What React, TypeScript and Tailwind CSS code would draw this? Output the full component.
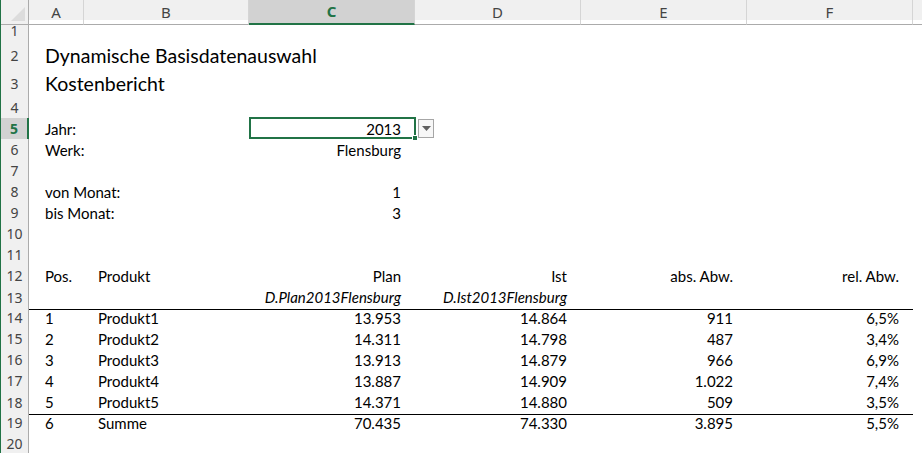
import React from 'react';

const cols = ['A', 'B', 'C', 'D', 'E', 'F'];

type Cell = { t?: string; r?: boolean; i?: boolean };

interface RowDef {
  n: number;
  h: string;
  big?: boolean;
  line?: boolean;
  cells?: Cell[];
}

const rows: RowDef[] = [
  { n: 1, h: 'h-[21px]' },
  { n: 2, h: 'h-[28px]', big: true, cells: [{ t: 'Dynamische Basisdatenauswahl' }] },
  { n: 3, h: 'h-[28px]', big: true, cells: [{ t: 'Kostenbericht' }] },
  { n: 4, h: 'h-[21px]' },
  { n: 5, h: 'h-[21px]', cells: [{ t: 'Jahr:' }, {}, { t: '2013', r: true }] },
  { n: 6, h: 'h-[21px]', cells: [{ t: 'Werk:' }, {}, { t: 'Flensburg', r: true }] },
  { n: 7, h: 'h-[21px]' },
  { n: 8, h: 'h-[21px]', cells: [{ t: 'von Monat:' }, {}, { t: '1', r: true }] },
  { n: 9, h: 'h-[21px]', cells: [{ t: 'bis Monat:' }, {}, { t: '3', r: true }] },
  { n: 10, h: 'h-[21px]' },
  { n: 11, h: 'h-[21px]' },
  {
    n: 12,
    h: 'h-[21px]',
    cells: [
      { t: 'Pos.' },
      { t: 'Produkt' },
      { t: 'Plan', r: true },
      { t: 'Ist', r: true },
      { t: 'abs. Abw.', r: true },
      { t: 'rel. Abw.', r: true },
    ],
  },
  {
    n: 13,
    h: 'h-[21px]',
    line: true,
    cells: [{}, {}, { t: 'D.Plan2013Flensburg', r: true, i: true }, { t: 'D.Ist2013Flensburg', r: true, i: true }],
  },
];

const products = [
  ['1', 'Produkt1', '13.953', '14.864', '911', '6,5%'],
  ['2', 'Produkt2', '14.311', '14.798', '487', '3,4%'],
  ['3', 'Produkt3', '13.913', '14.879', '966', '6,9%'],
  ['4', 'Produkt4', '13.887', '14.909', '1.022', '7,4%'],
  ['5', 'Produkt5', '14.371', '14.880', '509', '3,5%'],
  ['6', 'Summe', '70.435', '74.330', '3.895', '5,5%'],
];

products.forEach((p, idx) => {
  rows.push({
    n: 14 + idx,
    h: 'h-[21px]',
    line: idx === 4,
    cells: p.map((t, c) => ({ t, r: c > 1 })),
  });
});
rows.push({ n: 20, h: 'h-[21px]' });

const grid = 'grid grid-cols-[28px_55px_165px_166px_166px_166px_166px_1fr]';

// selection frame + fill handle + list dropdown of cell C5
function Selection() {
  return (
    <div className="pointer-events-none absolute inset-0">
      <div className="absolute left-0 top-[-1px] h-[22px] w-[167px] border-2 border-[#217346]" />
      <div className="absolute left-[163px] top-[17px] h-[6px] w-[6px] border border-white bg-[#217346]" />
      <div className="absolute left-[169px] top-[1px] flex h-[19px] w-[16px] items-center justify-center border border-[#a6a6a6] bg-[#f7f7f7]">
        <svg width="9" height="5" viewBox="0 0 9 5">
          <path d="M0 0h9L4.5 5z" fill="#606060" />
        </svg>
      </div>
    </div>
  );
}

function SheetRow({ row }: { row: RowDef }) {
  const active = row.n === 5;
  return (
    <div className={`${grid} ${row.h}`}>
      <div
        className={`flex items-center justify-center border-b border-[#d9d9d9] font-['Noto_Sans',sans-serif] text-[14px] ${
          active
            ? 'bg-[#d2d2d2] border-r-2 border-r-[#217346] font-bold text-[#217346]'
            : 'bg-[#f0f0f0] border-r border-r-[#ababab] text-[#444]'
        }`}
      >
        {row.n}
      </div>
      {cols.map((c, ci) => {
        const cell = row.cells?.[ci] ?? {};
        const pad = ci === 0 ? 'pl-[16px]' : 'pl-[14px]';
        return (
          <div
            key={c}
            className={`relative flex items-center whitespace-nowrap ${
              cell.r ? 'justify-end pr-[14px]' : pad
            } ${row.line ? 'border-b border-black' : ''} ${row.big ? 'text-[19.5px]' : 'text-[15px]'} ${
              cell.i ? 'italic' : ''
            }`}
          >
            <span>{cell.t}</span>
            {active && ci === 2 && <Selection />}
          </div>
        );
      })}
      <div />
    </div>
  );
}

export default function App() {
  return (
    <div className="h-[453px] w-[922px] overflow-hidden border-l border-[#217346] bg-white font-['Lato',sans-serif] text-black">
      <div className={`${grid} h-[20px] bg-[#f0f0f0] font-['Noto_Sans',sans-serif] text-[15px] text-[#444]`}>
        <div className="relative border-b border-r border-[#ababab]">
          <svg className="absolute bottom-[3px] right-[3px]" width="14" height="14" viewBox="0 0 14 14">
            <path d="M14 0V14H0z" fill="#dcdcdc" />
          </svg>
        </div>
        {cols.map((c) => (
          <div
            key={c}
            className={`flex items-center justify-center border-r border-r-[#d5d5d5] ${
              c === 'C'
                ? 'bg-[#d2d2d2] border-b-2 border-b-[#217346] font-bold text-[#217346]'
                : 'border-b border-b-[#ababab]'
            }`}
          >
            {c}
          </div>
        ))}
        <div className="border-b border-b-[#ababab]" />
      </div>
      {rows.map((r) => (
        <SheetRow key={r.n} row={r} />
      ))}
    </div>
  );
}
